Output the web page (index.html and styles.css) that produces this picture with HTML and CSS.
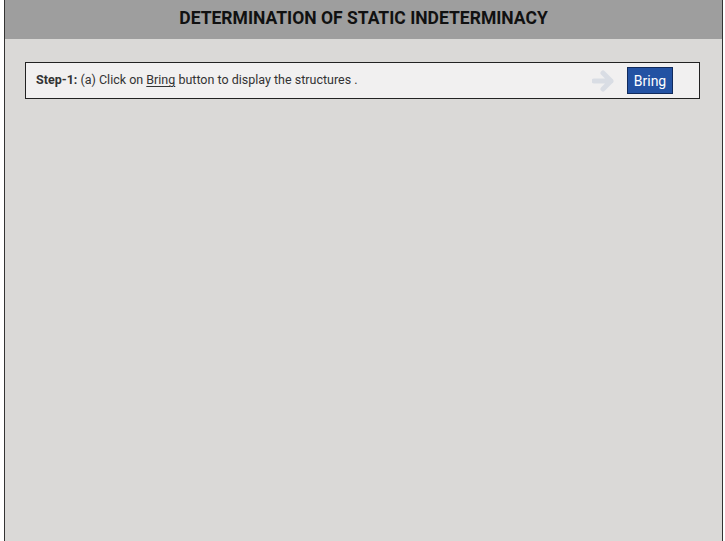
FILE: index.html
```html
<!DOCTYPE html>
<html lang="en">
<head>
    <meta charset="UTF-8">
    <meta name="viewport" content="width=device-width, initial-scale=1.0">
    <title>Determination of Static Indeterminacy</title>
    <link rel="stylesheet" href="styles.css">
</head>
<body>
    <div id="sim-container">
        <div class="sim-header">DETERMINATION OF STATIC INDETERMINACY</div>
        <div class="sim-body">
            <div class="step-box">
                <p class="step-text"><b>Step-1:</b> (a) Click on <u>Bring</u> button to display the structures .</p>
                <svg class="step-arrow" width="24" height="22" viewBox="0 0 24 22">
                    <path d="M2 11 H19 M11 3 L19 11 L11 19" fill="none" stroke="#d9dde4" stroke-width="5" stroke-linecap="round" stroke-linejoin="round"/>
                </svg>
                <button class="step-button" id="btn-bring">Bring</button>
            </div>
        </div>
    </div>
</body>
</html>
```

FILE: styles.css
```css
html, body {
    height: 100%;
}
body {
    margin: 0;
    padding: 0 2px 0 4px;
    font-family: Roboto, "Liberation Sans", sans-serif;
    background-color: #ffffff;
    box-sizing: border-box;
}
#sim-container {
    height: 100%;
    border-left: 1px solid #333;
    border-right: 1px solid #333;
    background-color: #dad9d7;
    display: flex;
    flex-direction: column;
}
.sim-header {
    height: 39px;
    line-height: 37px;
    background-color: #9e9e9e;
    text-align: center;
    font-weight: bold;
    font-size: 17.5px;
    color: #111;
}
.sim-body {
    padding: 23px 22px 0 20px;
}
.step-box {
    display: flex;
    align-items: center;
    height: 35px;
    padding: 0 26px 0 10px;
    border: 1px solid #222;
    background-color: #f1f0f0;
}
.step-text {
    flex-grow: 1;
    margin: 0 0 2px 0;
    font-size: 12.5px;
    color: #333;
}
.step-text u {
    text-underline-offset: 2px;
}
.step-arrow {
    margin-right: 11px;
}
.step-button {
    width: 46px;
    height: 27px;
    padding: 0;
    background-color: #2352a3;
    color: white;
    border: 1px solid #102a5c;
    font-family: Roboto, "Liberation Sans", sans-serif;
    font-size: 14px;
    cursor: pointer;
}
```
